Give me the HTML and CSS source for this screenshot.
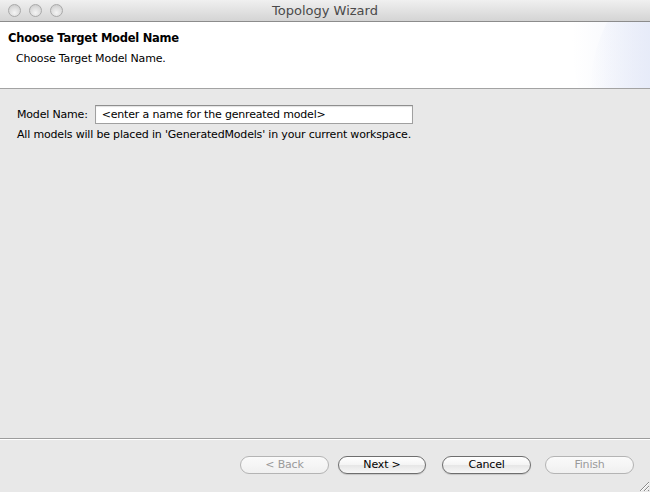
FILE: index.html
```html
<!DOCTYPE html>
<html>
<head>
<meta charset="utf-8">
<link rel="stylesheet" href="styles.css">
</head>
<body>
<div class="window">
  <div class="titlebar">
    <div class="lights">
      <span class="light"></span>
      <span class="light"></span>
      <span class="light"></span>
    </div>
    <div class="title">Topology Wizard</div>
  </div>
  <div class="header">
    <div class="swoosh outer"></div>
    <div class="swoosh inner"></div>
    <div class="h-title">Choose Target Model Name</div>
    <div class="h-desc">Choose Target Model Name.</div>
  </div>
  <div class="content">
    <div class="row">
      <label class="label">Model Name:</label>
      <div class="input">&lt;enter a name for the genreated model&gt;</div>
    </div>
    <div class="note">All models will be placed in 'GeneratedModels' in your current workspace.</div>
  </div>
  <div class="footer">
    <button class="btn disabled back">&lt; Back</button>
    <button class="btn next">Next &gt;</button>
    <button class="btn cancel">Cancel</button>
    <button class="btn disabled finish">Finish</button>
    <svg class="grip" width="10" height="10" viewBox="0 0 10 10">
      <path d="M1 10 L10 1 M5 10 L10 5 M9 10 L10 9" stroke="#8a8a8a" stroke-width="1" fill="none"/>
      <path d="M2 10 L10 2 M6 10 L10 6" stroke="#ffffff" stroke-width="1" fill="none"/>
    </svg>
  </div>
</div>
</body>
</html>
```
FILE: styles.css
```css
html, body {
  margin: 0;
  padding: 0;
}
body {
  font-family: "DejaVu Sans", "Liberation Sans", sans-serif;
  font-size: 11px;
  letter-spacing: -0.18px;
  color: #000;
  background: #e8e8e8;
}
.window {
  width: 650px;
  height: 492px;
  display: flex;
  flex-direction: column;
  overflow: hidden;
}
.titlebar {
  height: 21px;
  border-bottom: 1px solid #8c8c8c;
  background: linear-gradient(#f0f0f0, #d4d4d4);
  position: relative;
  display: flex;
  align-items: center;
  justify-content: center;
  flex: none;
}
.lights {
  position: absolute;
  left: 8px;
  top: 4px;
  display: flex;
  gap: 8px;
}
.light {
  width: 11px;
  height: 11px;
  border-radius: 50%;
  border: 1px solid #a9a9a9;
  background: radial-gradient(circle at 50% 70%, #f4f4f4 0%, #dcdcdc 55%, #c4c4c4 100%);
  box-sizing: content-box;
}
.title {
  font-size: 13px;
  color: #4a4a4a;
  letter-spacing: 0;
}
.header {
  height: 66px;
  background: #ffffff;
  border-bottom: 1px solid #a3a3a3;
  position: relative;
  overflow: hidden;
  flex: none;
}
.swoosh {
  position: absolute;
  border-radius: 50%;
}
.swoosh.outer {
  left: 572px;
  top: -140px;
  width: 320px;
  height: 320px;
  background: linear-gradient(to right, rgba(240,243,252,0) 0%, #eff2fb 30%, #ebeffa 100%);
}
.swoosh.inner {
  left: 590px;
  top: -80px;
  width: 300px;
  height: 300px;
  background: linear-gradient(to right, rgba(223,229,247,0) 0%, #e4e9f8 25%, #dce3f6 100%);
}
.h-title {
  position: relative;
  font-weight: bold;
  font-size: 11.5px;
  letter-spacing: -0.25px;
  padding: 9px 0 0 8px;
  line-height: 15px;
}
.h-desc {
  position: relative;
  padding: 6px 0 0 16px;
  line-height: 13px;
}
.content {
  flex: 1;
  padding: 16px 0 0 17px;
  border-bottom: 1px solid #9c9c9c;
  box-shadow: 0 1px 0 #ffffff;
}
.row {
  display: flex;
  align-items: center;
  gap: 7px;
}
.label {
  line-height: 19px;
}
.input {
  width: 310px;
  height: 17px;
  border: 1px solid #a0a0a0;
  border-top-color: #8e8e8e;
  background: #ffffff;
  padding-left: 6px;
  line-height: 17px;
  box-shadow: inset 0 1px 1px rgba(0,0,0,0.12);
  white-space: nowrap;
}
.note {
  margin-top: 4px;
  line-height: 13px;
}
.footer {
  height: 52px;
  margin-top: 1px;
  display: flex;
  align-items: flex-start;
  padding: 16px 0 0 240px;
  position: relative;
  flex: none;
  box-sizing: border-box;
}
.btn {
  font-family: "DejaVu Sans", "Liberation Sans", sans-serif;
  font-size: 11px;
  letter-spacing: -0.18px;
  height: 18px;
  border-radius: 9px;
  border: 1px solid #6e6e6e;
  background: linear-gradient(#ffffff 0%, #f4f4f4 50%, #e6e6e6 51%, #f7f7f7 100%);
  color: #000;
  padding: 0;
  line-height: 16px;
  box-sizing: border-box;
  box-shadow: 0 1px 1px rgba(0,0,0,0.15);
}
.btn.disabled {
  border-color: #b4b4b4;
  color: #9a9a9a;
  background: linear-gradient(#fafafa, #f0f0f0);
  box-shadow: none;
}
.back { width: 89px; }
.next { width: 88px; margin-left: 9px; }
.cancel { width: 89px; margin-left: 16px; }
.finish { width: 89px; margin-left: 14px; }
.grip {
  position: absolute;
  right: 1px;
  bottom: 1px;
}
```
